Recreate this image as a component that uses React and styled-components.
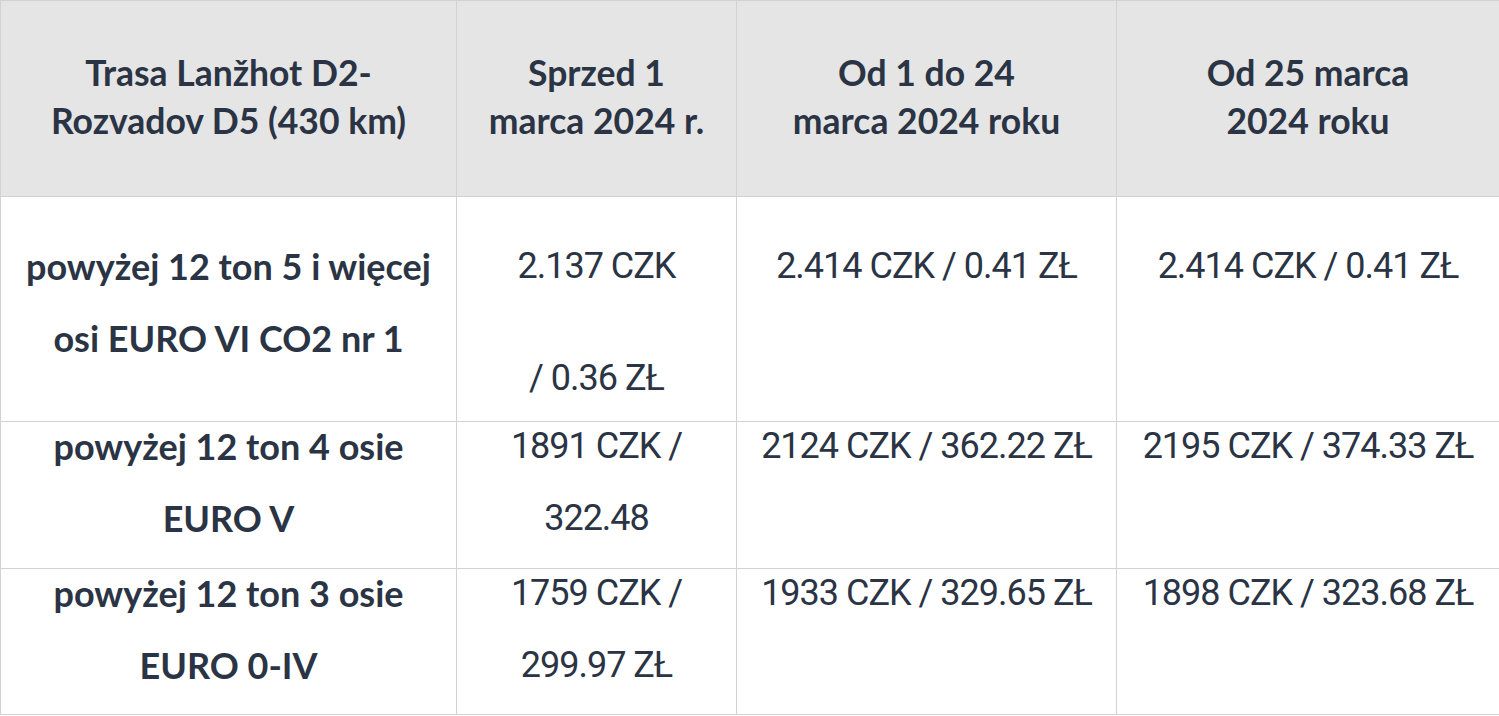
import { createGlobalStyle, styled } from "styled-components";

const GlobalStyle = createGlobalStyle`
  html, body {
    margin: 0;
    padding: 0;
    background: #ffffff;
  }
`;

const columns = [456, 280, 380, 383];

const header = [
  ["Trasa Lanžhot D2-", "Rozvadov D5 (430 km)"],
  ["Sprzed 1", "marca 2024 r."],
  ["Od 1 do 24", "marca 2024 roku"],
  ["Od 25 marca", "2024 roku"],
];

const rows = [
  {
    height: 225,
    offset: 33,
    label: "powyżej 12 ton 5 i więcej osi EURO VI CO2 nr 1",
    values: [["2.137 CZK", "/ 0.36 ZŁ"], ["2.414 CZK / 0.41 ZŁ"], ["2.414 CZK / 0.41 ZŁ"]],
  },
  {
    height: 147,
    offset: -12,
    label: "powyżej 12 ton 4 osie EURO V",
    values: [["1891 CZK / 322.48"], ["2124 CZK / 362.22 ZŁ"], ["2195 CZK / 374.33 ZŁ"]],
  },
  {
    height: 146,
    offset: -12,
    label: "powyżej 12 ton 3 osie EURO 0-IV",
    values: [["1759 CZK / 299.97 ZŁ"], ["1933 CZK / 329.65 ZŁ"], ["1898 CZK / 323.68 ZŁ"]],
  },
];

const App = () => {
  return (
    <>
      <GlobalStyle />
      <Table>
        <colgroup>
          {columns.map((w, i) => (
            <col key={i} style={{ width: w }} />
          ))}
        </colgroup>
        <thead>
          <HeadRow>
            {header.map((lines, i) => (
              <HeadCell key={i}>
                {lines[0]}
                <br />
                {lines[1]}
              </HeadCell>
            ))}
          </HeadRow>
        </thead>
        <tbody>
          {rows.map((row, i) => (
            <BodyRow key={i} $height={row.height}>
              <LabelCell>
                <Lines $offset={row.offset}>{row.label}</Lines>
              </LabelCell>
              {row.values.map((parts, j) => (
                <ValueCell key={j}>
                  <Lines $offset={row.offset}>
                    {parts.map((p, k) => (
                      <Para key={k}>{p}</Para>
                    ))}
                  </Lines>
                </ValueCell>
              ))}
            </BodyRow>
          ))}
        </tbody>
      </Table>
    </>
  );
};

const Table = styled.table`
  width: 1499px;
  table-layout: fixed;
  border-collapse: collapse;
  color: #2a3444;
`;

const HeadRow = styled.tr`
  height: 196px;
  background: #e5e5e5;
`;

const cellBase = `
  border: 1px solid #d2d2d2;
  text-align: center;
  padding: 0 12px;
`;

const HeadCell = styled.th`
  ${cellBase}
  vertical-align: middle;
  font-family: Lato, "Noto Sans", sans-serif;
  font-weight: 700;
  font-size: 35.5px;
  line-height: 48px;
  padding-bottom: 4px;
`;

const BodyRow = styled.tr`
  height: ${(p) => p.$height}px;
`;

const LabelCell = styled.td`
  ${cellBase}
  vertical-align: top;
  font-family: Lato, "Noto Sans", sans-serif;
  font-weight: 700;
  font-size: 36px;
  line-height: 72px;
`;

const ValueCell = styled.td`
  ${cellBase}
  vertical-align: top;
  font-family: Roboto, "Liberation Sans", sans-serif;
  font-size: 36px;
  letter-spacing: -1px;
  line-height: 72px;
`;

const Lines = styled.div`
  margin-top: ${(p) => p.$offset}px;
`;

const Para = styled.p`
  margin: 0;

  & + & {
    margin-top: 40px;
  }
`;

export default App;
